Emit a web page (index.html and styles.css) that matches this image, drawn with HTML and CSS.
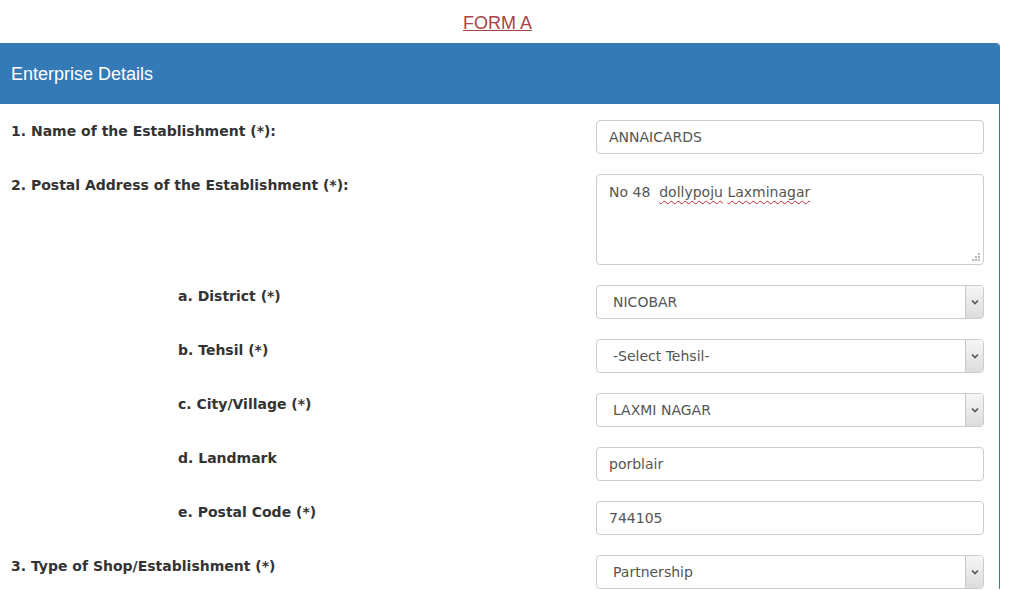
FILE: index.html
```html
<!DOCTYPE html>
<html>
<head>
<meta charset="utf-8">
<link rel="stylesheet" href="styles.css">
</head>
<body>
<div class="title-wrap"><a class="form-title" href="#">FORM A</a></div>
<div class="panel">
  <div class="panel-heading">Enterprise Details</div>
  <div class="panel-body">
    <div class="row">
      <label class="lbl">1. Name of the Establishment (*):</label>
      <div class="field">ANNAICARDS</div>
    </div>
    <div class="row">
      <label class="lbl">2. Postal Address of the Establishment (*):</label>
      <div class="field area">No 48&nbsp; <span class="sp">dollypoju</span> <span class="sp">Laxminagar</span>
        <svg class="grip" width="8" height="8" viewBox="0 0 8 8"><g fill="#b8b8b8"><rect x="6" y="0" width="2" height="2"/><rect x="3" y="3" width="2" height="2"/><rect x="6" y="3" width="2" height="2"/><rect x="0" y="6" width="2" height="2"/><rect x="3" y="6" width="2" height="2"/><rect x="6" y="6" width="2" height="2"/></g></svg>
      </div>
    </div>
    <div class="row">
      <label class="lbl sub">a. District (*)</label>
      <div class="field select">NICOBAR<span class="arrow"><svg width="8" height="6" viewBox="0 0 8 6"><path d="M1 1.5 L4 4.5 L7 1.5" fill="none" stroke="#555" stroke-width="1.6"/></svg></span></div>
    </div>
    <div class="row">
      <label class="lbl sub">b. Tehsil (*)</label>
      <div class="field select">-Select Tehsil-<span class="arrow"><svg width="8" height="6" viewBox="0 0 8 6"><path d="M1 1.5 L4 4.5 L7 1.5" fill="none" stroke="#555" stroke-width="1.6"/></svg></span></div>
    </div>
    <div class="row">
      <label class="lbl sub">c. City/Village (*)</label>
      <div class="field select">LAXMI NAGAR<span class="arrow"><svg width="8" height="6" viewBox="0 0 8 6"><path d="M1 1.5 L4 4.5 L7 1.5" fill="none" stroke="#555" stroke-width="1.6"/></svg></span></div>
    </div>
    <div class="row">
      <label class="lbl sub">d. Landmark</label>
      <div class="field">porblair</div>
    </div>
    <div class="row">
      <label class="lbl sub">e. Postal Code (*)</label>
      <div class="field">744105</div>
    </div>
    <div class="row">
      <label class="lbl">3. Type of Shop/Establishment (*)</label>
      <div class="field select">Partnership<span class="arrow"><svg width="8" height="6" viewBox="0 0 8 6"><path d="M1 1.5 L4 4.5 L7 1.5" fill="none" stroke="#555" stroke-width="1.6"/></svg></span></div>
    </div>
  </div>
</div>
</body>
</html>
```
FILE: styles.css
```css
html, body {
  margin: 0;
  padding: 0;
  background: #fff;
}
body {
  width: 1011px;
  overflow: hidden;
  font-family: "DejaVu Sans", Verdana, sans-serif;
}
.title-wrap {
  width: 995px;
  text-align: center;
  padding-top: 13px;
  height: 43px;
  box-sizing: border-box;
}
.form-title {
  font-family: "Liberation Sans", Arial, sans-serif;
  font-size: 18px;
  color: #a94442;
  text-decoration: underline;
  line-height: 20px;
}
.panel {
  width: 1001px;
  margin-left: -1px;
  border: 1px solid #337ab7;
  border-top-right-radius: 4px;
  box-sizing: border-box;
  border-bottom: none;
}
.panel-heading {
  background: #337ab7;
  color: #fff;
  font-family: "Liberation Sans", Arial, sans-serif;
  font-size: 18px;
  height: 60px;
  line-height: 60px;
  padding-left: 11px;
  border-top-right-radius: 3px;
}
.panel-body {
  padding: 16px 15px 0 11px;
}
.row {
  display: grid;
  grid-template-columns: 1fr 388px;
  margin-bottom: 20px;
}
.lbl {
  font-weight: bold;
  font-size: 14px;
  color: #333;
  line-height: 18px;
  padding-top: 2px;
}
.lbl.sub {
  padding-left: 167px;
}
.field {
  position: relative;
  height: 34px;
  box-sizing: border-box;
  border: 1px solid #ccc;
  border-radius: 4px;
  padding: 0 12px;
  font-size: 14px;
  line-height: 32px;
  color: #555;
  white-space: pre;
}
.field.area {
  height: 91px;
  line-height: 18px;
  padding-top: 8px;
}
.sp {
  text-decoration: underline wavy #c02828;
  text-decoration-thickness: 1px;
  text-underline-offset: 3px;
}
.grip {
  position: absolute;
  right: 3px;
  bottom: 3px;
}
.field.select {
  padding-left: 16px;
}
.arrow {
  position: absolute;
  right: 0;
  top: 0;
  bottom: 0;
  width: 17px;
  border-left: 1px solid #c8c8c8;
  background: linear-gradient(#f6f6f6, #dcdcdc);
  border-radius: 0 3px 3px 0;
  display: flex;
  align-items: center;
  justify-content: center;
}
```
